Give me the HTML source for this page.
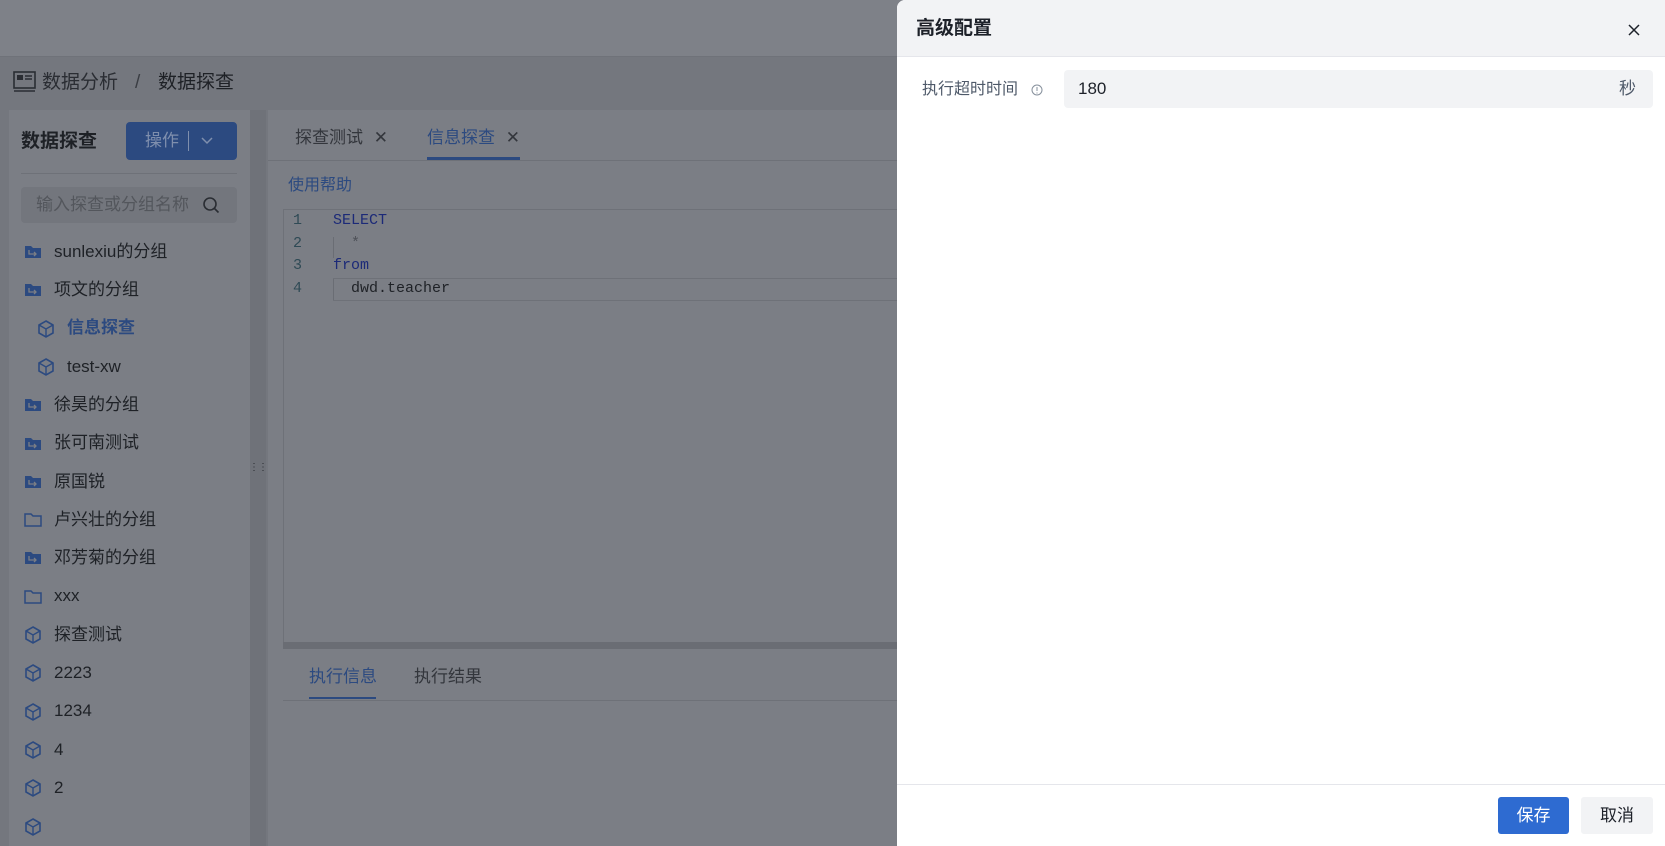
<!DOCTYPE html>
<html><head><meta charset="utf-8"><style>
*{margin:0;padding:0;box-sizing:border-box}
body{width:1665px;height:846px;overflow:hidden;background:#74777e;font-family:"Liberation Sans","Noto Sans CJK SC",sans-serif;position:relative;color:#1e2126;line-height:1.2}
.a{position:absolute}
.top{left:0;top:0;width:1665px;height:57px;background:#7e8188;border-bottom:1px solid #6f7279}
.side{left:9px;top:110px;width:241px;height:736px;background:#7b7e85}
.gut{left:250px;top:110px;width:16px;height:736px;background:#6f7279}
.main{left:268px;top:110px;width:640px;height:736px;background:#7b7e85}
.it{position:absolute;font-size:17px;color:#1e2126;display:flex;align-items:center;height:24px}
.it svg{margin-right:12px}
.drawer{left:897px;top:0;width:768px;height:846px;background:#fff;border-top-left-radius:8px;overflow:hidden}
.code{font-family:"Liberation Mono",monospace;font-size:15px}
</style></head><body>
<div class="a top"></div>
<svg class="a" style="left:13px;top:71px" width="23" height="22"><rect x="1" y="1" width="21" height="16" fill="none" stroke="#2a2d33" stroke-width="1.6"/><rect x="4" y="4" width="6" height="5" fill="#2a2d33"/><path d="M12 5h7M12 8h7M1 20h21" stroke="#2a2d33" stroke-width="1.4"/></svg>
<div class="a" style="left:42px;top:72px;font-size:19px;color:#2a2d33">数据分析</div>
<div class="a" style="left:135px;top:72px;font-size:19px;color:#3a3d43">/</div>
<div class="a" style="left:158px;top:72px;font-size:19px;color:#1e2126">数据探查</div>

<div class="a side"></div>
<div class="a gut"></div>
<div class="a" style="left:249px;top:462px;font-size:10px;color:#2a2d33;letter-spacing:-1px">⋮⋮</div>
<div class="a" style="left:21px;top:131px;font-size:19px;font-weight:bold">数据探查</div>
<div class="a" style="left:126px;top:122px;width:111px;height:38px;background:#2c4a80;border-radius:4px;color:#7f8fad;font-size:17px">
 <span class="a" style="left:19px;top:9px">操作</span>
 <span class="a" style="left:62px;top:9px;width:1px;height:20px;background:#7f8fad"></span>
 <svg class="a" style="left:74px;top:13px" width="14" height="12"><path d="M2 3l5 5 5-5" stroke="#7f8fad" stroke-width="1.5" fill="none"/></svg>
</div>
<div class="a" style="left:21px;top:173px;width:216px;height:1px;background:#6e7178"></div>
<div class="a" style="left:21px;top:187px;width:216px;height:36px;background:#73767d;border-radius:4px">
 <span class="a" style="left:15px;top:8px;font-size:17px;color:#53565c">输入探查或分组名称</span>
 <svg class="a" style="left:181px;top:9px" width="18" height="18"><circle cx="8" cy="8" r="6" stroke="#2a2d33" stroke-width="1.6" fill="none"/><path d="M12.5 12.5l4 4" stroke="#2a2d33" stroke-width="1.6"/></svg>
</div>
<div id="list"></div>

<div class="a main"></div>
<div class="a" style="left:268px;top:160px;width:640px;height:1px;background:#6e7178"></div>
<div class="a" style="left:295px;top:128px;font-size:17px;color:#33363c">探查测试 <span style="margin-left:6px">✕</span></div>
<div class="a" style="left:427px;top:128px;font-size:17px;color:#2c4a80">信息探查 <span style="margin-left:6px;color:#33363c">✕</span></div>
<div class="a" style="left:427px;top:157px;width:93px;height:3px;background:#2c4a80"></div>
<div class="a" style="left:288px;top:176px;font-size:16px;color:#2c4a80">使用帮助</div>
<div class="a" style="left:283px;top:209px;width:1px;height:433px;background:#6e7178"></div>
<div class="a" style="left:283px;top:209px;width:625px;height:1px;background:#6e7178"></div>
<div class="a" style="left:333px;top:278px;width:575px;height:23px;border-top:1px solid #6e7178;border-bottom:1px solid #6e7178"></div>
<div class="a" style="left:333px;top:237px;width:1px;height:21px;background:#6a6d74"></div>
<div class="a" style="left:333px;top:279px;width:1px;height:21px;background:#6a6d74"></div>
<div class="a code" style="left:293px;top:210px;line-height:22.5px;color:#2f4a55">1<br>2<br>3<br>4</div>
<div class="a code" style="left:333px;top:210px;line-height:22.5px;white-space:pre"><span style="color:#1c2a78">SELECT</span>
<span style="color:#4e5158">  *</span>
<span style="color:#1c2a78">from</span>
<span style="color:#1e2126">  dwd.teacher</span></div>
<div class="a" style="left:283px;top:642px;width:625px;height:7px;background:#6a6d74"></div>
<div class="a" style="left:283px;top:700px;width:625px;height:1px;background:#6e7178"></div>
<div class="a" style="left:309px;top:667px;font-size:17px;color:#2c4a80">执行信息</div>
<div class="a" style="left:309px;top:697px;width:67px;height:2px;background:#2c4a80"></div>
<div class="a" style="left:414px;top:667px;font-size:17px;color:#33363c">执行结果</div>

<div class="a drawer">
 <div class="a" style="left:0;top:0;width:768px;height:57px;background:#f2f3f5;border-bottom:1px solid #e5e6eb"></div>
 <div class="a" style="left:19px;top:18px;font-size:19px;font-weight:bold;color:#1d2129">高级配置</div>
 <svg class="a" style="left:731px;top:24px" width="12" height="12"><path d="M1 1l10 10M11 1L1 11" stroke="#1d2129" stroke-width="1.5"/></svg>
 <div class="a" style="left:25px;top:80px;font-size:16px;color:#4e5969">执行超时时间</div>
 <svg class="a" style="left:134px;top:84px" width="12" height="12"><circle cx="6" cy="6" r="5" stroke="#86909c" fill="none"/><path d="M6 3v4M6 8.5v1" stroke="#86909c"/></svg>
 <div class="a" style="left:167px;top:70px;width:589px;height:38px;background:#f2f3f5;border-radius:4px">
  <span class="a" style="left:14px;top:9px;font-size:17px;color:#1d2129">180</span>
  <span class="a" style="left:555px;top:9px;font-size:17px;color:#4e5969">秒</span>
 </div>
 <div class="a" style="left:0;top:784px;width:768px;height:1px;background:#e5e6eb"></div>
 <div class="a" style="left:601px;top:797px;width:71px;height:37px;background:#2e6bd1;border-radius:3px;color:#fff;font-size:17px;text-align:center;line-height:37px">保存</div>
 <div class="a" style="left:684px;top:797px;width:72px;height:37px;background:#f2f3f5;border-radius:3px;color:#1d2129;font-size:17px;text-align:center;line-height:37px">取消</div>
</div>
<script>
var items=[["f","sunlexiu的分组",0],["o","项文的分组",0],["c","信息探查",1],["c","test-xw",1],["f","徐昊的分组",0],["f","张可南测试",0],["f","原国锐",0],["e","卢兴壮的分组",0],["f","邓芳菊的分组",0],["e","xxx",0],["c","探查测试",0],["c","2223",0],["c","1234",0],["c","4",0],["c","2",0],["c","",0]];
var h="";items.forEach(function(t,i){var y=240+i*38.3,x=t[2]?37:24,ic;
if(t[0]=="c")ic='<svg width="18" height="18"><path d="M9 1l7 4v8l-7 4-7-4V5z" fill="none" stroke="#2c4a80" stroke-width="1.6"/><path d="M2 5l7 4 7-4M9 9v8" stroke="#2c4a80" stroke-width="1.4" fill="none"/></svg>';
else if(t[0]=="e")ic='<svg width="18" height="16"><path d="M1 2h6l2 2h8v10H1z" fill="none" stroke="#2c4a80" stroke-width="1.5"/></svg>';
else ic='<svg width="18" height="16"><path d="M1 2h6l2 2h8v10H1z" fill="#2c4a80"/><path d="M5 6v4h7M10 8l2 2-2 2" stroke="#7b7e85" stroke-width="1.3" fill="none"/></svg>';
var st=t[2]&&i==2?'color:#2c4a80;font-weight:bold;':'';
h+='<div class="it" style="left:'+x+'px;top:'+y+'px;'+st+'">'+ic+'<span>'+t[1]+'</span></div>';});
document.getElementById("list").innerHTML=h;
</script>
</body></html>
